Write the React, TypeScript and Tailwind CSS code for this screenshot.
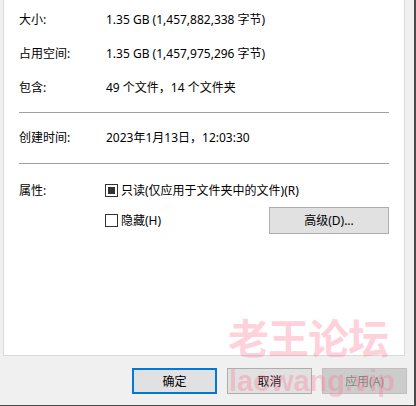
import React from "react";

const font = { fontFamily: '"Segoe UI", "Noto Sans", "Noto Sans CJK SC", sans-serif' };

function Row({ label, value }: { label: string; value: string }) {
  return (
    <div className="flex h-[34px] items-center">
      <div className="w-[87px] shrink-0">{label}</div>
      <div>{value}</div>
    </div>
  );
}

function CheckBox({ checked }: { checked?: boolean }) {
  return (
    <span className="flex h-[13px] w-[13px] shrink-0 items-center justify-center border border-[#333] bg-white">
      {checked && <span className="h-[7px] w-[7px] bg-[#333]" />}
    </span>
  );
}

export default function App() {
  return (
    <div
      className="relative h-[406px] w-[416px] overflow-hidden border-r-2 border-b border-[#4a4a4a] bg-[#f0f0f0] text-[12px] leading-[17px] text-black"
      style={font}
    >
      {/* 内容面板 */}
      <div className="ml-[3px] h-[356px] w-[402px] border-x border-b border-[#d9d9d9] bg-white pl-[15px] pr-[15px] pt-[2px]">
        <Row label="大小:" value="1.35 GB (1,457,882,338 字节)" />
        <Row label="占用空间:" value="1.35 GB (1,457,975,296 字节)" />
        <Row label="包含:" value="49 个文件，14 个文件夹" />
        <div className="mt-[8px] h-px bg-[#a0a0a0]" />
        <div className="mt-[7px]">
          <Row label="创建时间:" value="2023年1月13日，12:03:30" />
        </div>
        <div className="mt-[9px] h-px bg-[#a0a0a0]" />

        {/* 属性 */}
        <div className="mt-[18px] flex">
          <div className="w-[86px] shrink-0">属性:</div>
          <div className="flex flex-1 flex-col">
            <div className="flex items-center gap-[3px]">
              <CheckBox checked />
              <span>只读(仅应用于文件夹中的文件)(R)</span>
            </div>
            <div className="mt-[8px] flex items-center justify-between">
              <div className="flex items-center gap-[3px]">
                <CheckBox />
                <span>隐藏(H)</span>
              </div>
              <button className="h-[27px] w-[120px] border border-[#adadad] bg-[#e1e1e1]">
                高级(D)...
              </button>
            </div>
          </div>
        </div>
      </div>

      {/* 底部按钮 */}
      <div className="mt-[12px] flex justify-end gap-[10px] pr-[7px]">
        <button className="h-[26px] w-[85px] border-2 border-[#0078d7] bg-[#e1e1e1]">确定</button>
        <button className="h-[26px] w-[85px] border border-[#adadad] bg-[#e1e1e1]">取消</button>
        <button className="h-[26px] w-[85px] border border-[#bfbfbf] bg-[#cccccc] text-[#838383]">
          应用(A)
        </button>
      </div>

      {/* 水印 */}
      <div
        className="pointer-events-none absolute left-[228px] top-[312px] text-[41px] font-bold leading-[48px] tracking-[-1px] text-[#ff7a98]/35"
        style={{ fontFamily: '"Noto Sans CJK SC", sans-serif' }}
      >
        老王论坛
      </div>
      <div
        className="pointer-events-none absolute left-[229px] top-[363px] text-[29px] font-bold leading-[36px] text-[#ff7a98]/35"
        style={{ fontFamily: '"Liberation Sans", sans-serif' }}
      >
        laowang.vip
      </div>
    </div>
  );
}
